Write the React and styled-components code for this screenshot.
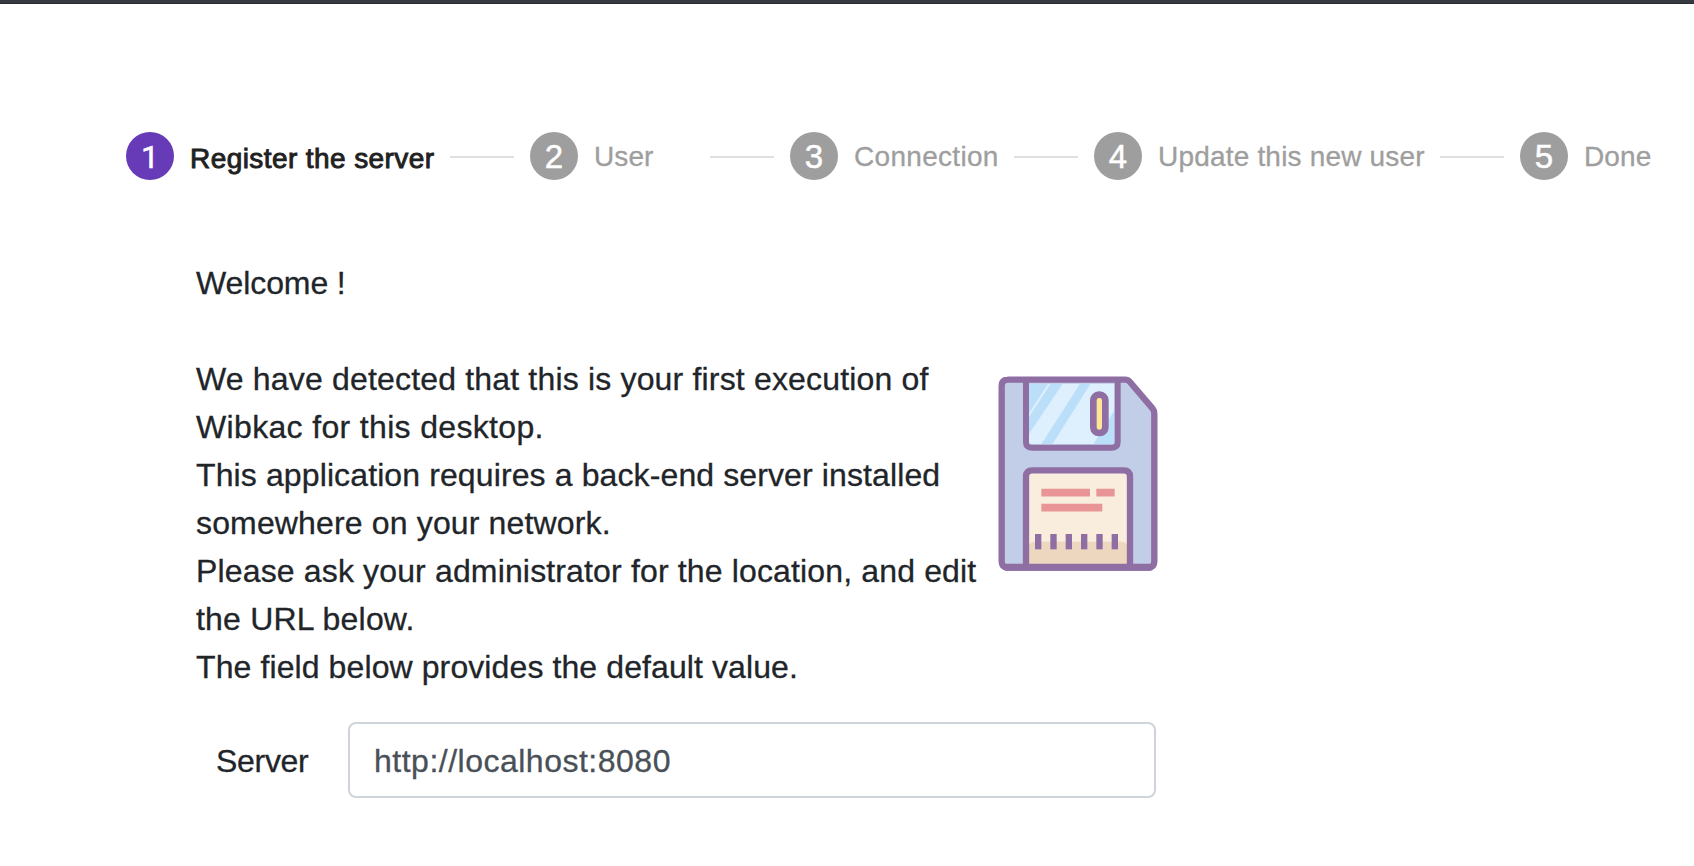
import React from "react";
import styled, { createGlobalStyle } from "styled-components";

const GlobalStyle = createGlobalStyle`
  * { box-sizing: border-box; }
  body {
    margin: 0;
    background: #fff;
    color: #212529;
    font-family: "Liberation Sans", Arial, sans-serif;
    overflow: hidden;
  }
`;

const Page = styled.div`
  width: 1694px;
  height: 866px;
  overflow: hidden;
  background: #fff;
`;

const NavBar = styled.header`
  height: 4px;
  background: #343a40;
  border-bottom: 1px solid #2a2d31;
`;

const Stepper = styled.ol`
  display: flex;
  align-items: center;
  gap: 16px;
  margin: 0;
  padding: 128px 0 0 126px;
  list-style: none;
`;

const Step = styled.li`
  display: flex;
  align-items: center;
  gap: 16px;
  height: 48px;
`;

const Badge = styled.span`
  flex: none;
  width: 48px;
  height: 48px;
  border-radius: 50%;
  background: ${(p) => (p.$active ? "#673ab7" : "#9e9e9e")};
  color: #fff;
  font-family: ${(p) => (p.$active ? "Roboto, sans-serif" : "inherit")};
  font-size: ${(p) => (p.$active ? 32 : 33)}px;
  line-height: 50px;
  text-align: center;
  -webkit-text-stroke: 0.5px #fff;
`;

const StepLabel = styled.span`
  flex: none;
  width: ${(p) => p.$width}px;
  padding-top: ${(p) => (p.$active ? 5 : 2)}px;
  color: ${(p) => (p.$active ? "#212121" : "#9e9e9e")};
  font-size: 28px;
  line-height: 48px;
  white-space: nowrap;
  letter-spacing: ${(p) => p.$spacing}px;
  -webkit-text-stroke: ${(p) => (p.$active ? "0.9px #212121" : "0.3px #9e9e9e")};
`;

const Connector = styled.li`
  flex: none;
  width: 64px;
  height: 2px;
  margin-top: 2px;
  background: #e0e0e0;
`;

const Panel = styled.main`
  width: 964px;
  margin: 79px 0 0 196px;
`;

const Intro = styled.section`
  display: flex;
`;

const Message = styled.div`
  flex: none;
  width: 802px;
  font-size: 32px;
  line-height: 48px;
`;

const Line = styled.div`
  height: 48px;
  white-space: nowrap;
  letter-spacing: ${(p) => p.$spacing || 0}px;
  -webkit-text-stroke: 0.3px #212529;
`;

const Floppy = styled.svg`
  flex: none;
  display: block;
  width: 160px;
  height: 197px;
  margin-top: 116px;
`;

const Field = styled.div`
  display: flex;
  align-items: center;
  margin-top: 31px;
  padding-left: 20px;
`;

const FieldLabel = styled.label`
  flex: none;
  width: 132px;
  padding-top: 2px;
  font-size: 32px;
  line-height: 48px;
  letter-spacing: ${(p) => p.$spacing}px;
  -webkit-text-stroke: 0.3px #212529;
`;

const Input = styled.input`
  width: 808px;
  height: 76px;
  padding: 2px 24px 0;
  border: 2px solid #ced4da;
  border-radius: 8px;
  background: #fff;
  color: #495057;
  font: 32px "Liberation Sans", Arial, sans-serif;
  letter-spacing: ${(p) => p.$spacing}px;
  -webkit-text-stroke: 0.3px #495057;
  outline: none;
`;

const steps = [
  { label: "Register the server", width: 244, spacing: 0.42 },
  { label: "User", width: 100, spacing: 0.1 },
  { label: "Connection", width: 144, spacing: 0.3 },
  { label: "Update this new user", width: 266, spacing: 0.19 },
  { label: "Done", width: 80, spacing: 0.1 },
];

const lines = [
  { text: "Welcome !", spacing: -0.1 },
  { text: "", spacing: 0 },
  { text: "We have detected that this is your first execution of", spacing: 0.175 },
  { text: "Wibkac for this desktop.", spacing: 0.34 },
  { text: "This application requires a back-end server installed", spacing: 0.115 },
  { text: "somewhere on your network.", spacing: 0.15 },
  { text: "Please ask your administrator for the location, and edit", spacing: 0.15 },
  { text: "the URL below.", spacing: 0.19 },
  { text: "The field below provides the default value.", spacing: 0.1 },
];

const tickPositions = [165, 211, 257, 303, 349, 395];

function FloppyIcon() {
  return (
    <Floppy viewBox="54 45 480 591" aria-hidden="true">
      <path
        d="M82 59H435Q444 59 450 66L518 146Q523 152 523 162V604Q523 623 504 623H84Q65 623 65 604V78Q65 59 84 59Z"
        fill="#c2cde7"
        stroke="#8e6ea3"
        strokeWidth="19"
      />
      <clipPath id="shutter">
        <rect x="147" y="71" width="257" height="182" />
      </clipPath>
      <g clipPath="url(#shutter)">
        <rect x="147" y="71" width="257" height="182" fill="#def0fe" />
        <path d="M147 71H204L147 160ZM212 71H248L147 222V170ZM300 71H332L217 253H184ZM404 150V253H340Z" fill="#bbdef9" />
      </g>
      <path d="M138 60V246Q138 263 155 263H396Q413 263 413 246V60" fill="none" stroke="#8e6ea3" strokeWidth="18" />
      <rect x="340" y="104" width="36" height="115" rx="17" fill="#ffe694" stroke="#8e6ea3" strokeWidth="20" />
      <path d="M138 620V350Q138 331 157 331H431Q450 331 450 350V620" fill="#f9eddd" />
      <path d="M147 554Q153 545 165 545H422Q436 545 442 556V612H147Z" fill="#edd7bf" />
      <path d="M138 620V350Q138 331 157 331H431Q450 331 450 350V620" fill="none" stroke="#8e6ea3" strokeWidth="19" />
      <path d="M75 622H514" stroke="#8e6ea3" strokeWidth="21" />
      <path d="M184 398H330M349 398H404M184 443H367" stroke="#e99598" strokeWidth="23" />
      {tickPositions.map((x) => (
        <rect key={x} x={x} y="522" width="19" height="46" fill="#8e6ea3" />
      ))}
    </Floppy>
  );
}

export default function App() {
  return (
    <Page>
      <GlobalStyle />
      <NavBar />
      <Stepper>
        {steps.map((step, i) => (
          <React.Fragment key={step.label}>
            {i > 0 && <Connector />}
            <Step>
              <Badge $active={i === 0}>{i + 1}</Badge>
              <StepLabel $active={i === 0} $width={step.width} $spacing={step.spacing}>
                {step.label}
              </StepLabel>
            </Step>
          </React.Fragment>
        ))}
      </Stepper>
      <Panel>
        <Intro>
          <Message>
            {lines.map((line, i) => (
              <Line key={i} $spacing={line.spacing}>
                {line.text}
              </Line>
            ))}
          </Message>
          <FloppyIcon />
        </Intro>
        <Field>
          <FieldLabel htmlFor="server" $spacing={-0.3}>Server</FieldLabel>
          <Input id="server" defaultValue="http://localhost:8080" $spacing={0.5} />
        </Field>
      </Panel>
    </Page>
  );
}
